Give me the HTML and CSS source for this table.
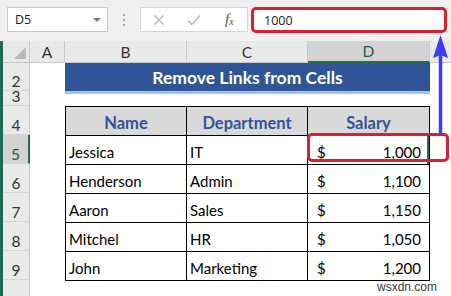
FILE: index.html
```html
<!DOCTYPE html>
<html>
<head>
<meta charset="utf-8">
<link rel="stylesheet" href="styles.css">
</head>
<body>
<div class="topbar">
  <div class="namebox"><span>D5</span><span class="caret"></span></div>
  <div class="grip"><i></i><i></i><i></i></div>
  <div class="fxbtns">
    <svg class="ico" width="12" height="12" viewBox="0 0 12 12"><path d="M1.5 1.5L10.5 10.5M10.5 1.5L1.5 10.5" stroke="#b3b3b3" stroke-width="1.3" fill="none"/></svg>
    <svg class="ico" width="14" height="12" viewBox="0 0 14 12"><path d="M1 6.5L4.8 10.5L13 1.5" stroke="#b3b3b3" stroke-width="1.4" fill="none"/></svg>
    <span class="fx">f<sub>x</sub></span>
  </div>
  <div class="formula">1000</div>
</div>
<div class="sheetwrap">
  <div class="strip"></div>
  <div class="sheet">
    <div class="ch corner"><span class="tri"></span></div>
    <div class="ch">A</div>
    <div class="ch">B</div>
    <div class="ch">C</div>
    <div class="ch sel">D</div>
    <div class="ch last"></div>

    <div class="rh">2</div>
    <div class="rh">3</div>
    <div class="rh">4</div>
    <div class="rh sel">5</div>
    <div class="rh">6</div>
    <div class="rh">7</div>
    <div class="rh">8</div>
    <div class="rh">9</div>
    <div class="rh"></div>

    <div class="title">Remove Links from Cells</div>

    <div class="table">
      <div class="th">Name</div>
      <div class="th">Department</div>
      <div class="th">Salary</div>

      <div class="td">Jessica</div>
      <div class="td">IT</div>
      <div class="td num active"><span>$</span><span>1,000</span></div>

      <div class="td">Henderson</div>
      <div class="td">Admin</div>
      <div class="td num"><span>$</span><span>1,100</span></div>

      <div class="td">Aaron</div>
      <div class="td">Sales</div>
      <div class="td num"><span>$</span><span>1,150</span></div>

      <div class="td">Mitchel</div>
      <div class="td">HR</div>
      <div class="td num"><span>$</span><span>1,050</span></div>

      <div class="td">John</div>
      <div class="td">Marketing</div>
      <div class="td num"><span>$</span><span>1,200</span></div>
    </div>
  </div>
</div>

<div class="mark-cell"></div>
<svg class="arrow" width="18" height="100" viewBox="0 0 18 100">
  <path d="M9.5 20V100" stroke="#3c3cf0" stroke-width="3.5" fill="none"/>
  <path d="M9.5 2L17 25L9.5 22L2 25Z" fill="#3c3cf0"/>
</svg>
<div class="watermark">wsxdn.com</div>
</body>
</html>
```

FILE: styles.css
```css
* { box-sizing: border-box; margin: 0; padding: 0; }
html, body { width: 451px; height: 296px; overflow: hidden; }
body {
  background: #f0f0f0;
  font-family: Lato, "Liberation Sans", sans-serif;
  position: relative;
}

/* formula bar */
.topbar {
  height: 41px;
  display: flex;
  align-items: flex-start;
  padding: 7px 0 0 7px;
  font-family: "Open Sans", "Liberation Sans", sans-serif;
  font-size: 12.5px;
  color: #222;
}
.namebox {
  width: 101px;
  height: 25px;
  background: #fff;
  border: 1px solid #c9c9c9;
  display: flex;
  align-items: center;
  justify-content: space-between;
  padding: 0 6px 0 7px;
}
.caret {
  width: 0; height: 0;
  border-left: 4px solid transparent;
  border-right: 4px solid transparent;
  border-top: 4px solid #7a7a7a;
}
.grip {
  width: 6px;
  height: 25px;
  margin-left: 13px;
  display: flex;
  flex-direction: column;
  align-items: center;
  justify-content: center;
  gap: 3px;
}
.grip i { width: 2px; height: 2px; background: #a6a6a6; }
.fxbtns {
  margin-left: 13px;
  width: 108px;
  height: 25px;
  background: #fff;
  border: 1px solid #d6d6d6;
  display: grid;
  grid-template-columns: repeat(3, 1fr);
  align-items: center;
  justify-items: center;
}
.fx {
  font-family: "Liberation Serif", serif;
  font-style: italic;
  font-size: 15px;
  color: #555;
  line-height: 1;
}
.fx sub { font-size: 10px; vertical-align: -1px; }
.formula {
  margin-left: 3px;
  width: 196px;
  height: 26px;
  background: #fff;
  border: 3px solid #dc1f2e;
  border-radius: 5px;
  padding-left: 10px;
  display: flex;
  align-items: center;
}

/* sheet */
.sheetwrap { display: flex; height: 255px; overflow: hidden; }
.strip { width: 3px; background: #1f6b57; flex: none; }
.sheet {
  flex: 1;
  display: grid;
  grid-template-columns: 27px 35px 122px 121px 122px 1fr;
  grid-template-rows: 22px 28px 15px repeat(7, 29px);
  background: #fff;
  font-size: 15px;
  line-height: 18px;
}
.ch {
  background: #e9e9e9;
  border-right: 1px solid #c9c9c9;
  border-bottom: 1px solid #c9c9c9;
  color: #333;
  font-size: 15.5px;
  display: flex;
  align-items: flex-end;
  justify-content: center;
  padding-bottom: 1px;
}
.ch.sel {
  background: #d3d3d3;
  color: #1e5e46;
  border-bottom: 2px solid #217346;
}
.ch.last { border-right: none; }
.corner { justify-content: flex-end; padding: 0 3px 3px 0; }
.tri {
  width: 0; height: 0;
  border-left: 12px solid transparent;
  border-bottom: 12px solid #b9b9b9;
}
.rh {
  grid-column: 1;
  background: #e9e9e9;
  border-right: 1px solid #c9c9c9;
  border-bottom: 1px solid #d5d5d5;
  color: #333;
  font-size: 15.5px;
  display: flex;
  align-items: flex-end;
  justify-content: center;
  overflow: hidden;
}
.rh.sel {
  background: #d3d3d3;
  color: #1e5e46;
  border-right: 2px solid #217346;
}

.title {
  grid-column: 3 / 6;
  grid-row: 2;
  background: #2f5597;
  box-shadow: 0 3px 0 #9dc3e6;
  color: #fff;
  font-weight: bold;
  font-size: 17.5px;
  display: flex;
  align-items: center;
  justify-content: center;
  padding-top: 2px;
}

.table {
  grid-column: 3 / 6;
  grid-row: 4 / 10;
  align-self: start;
  height: 175px;
  display: grid;
  grid-template-columns: 120px 120px 121px;
  grid-auto-rows: 28px;
  gap: 1px;
  padding: 1px;
  background: #000;
}
.th, .td {
  background: #fff;
  display: flex;
  align-items: flex-end;
  padding: 0 3px 3px;
  color: #000;
}
.th {
  background: #d9d9d9;
  justify-content: center;
  font-weight: bold;
  font-size: 16.5px;
  color: #2f5597;
  padding-bottom: 3px;
}
.td.num { justify-content: space-between; padding: 0 8px 3px 9px; }
.td.active { box-shadow: inset -2px 0 0 #217346; }

/* annotations */
.mark-cell {
  position: absolute;
  left: 307px;
  top: 133px;
  width: 142px;
  height: 29px;
  border: 3px solid #dc1f2e;
  border-radius: 5px;
}
.arrow { position: absolute; left: 431px; top: 33px; }
.watermark {
  position: absolute;
  left: 377px;
  top: 280px;
  font-family: "Liberation Sans", sans-serif;
  font-size: 12px;
  color: #3a3a3a;
}
```
